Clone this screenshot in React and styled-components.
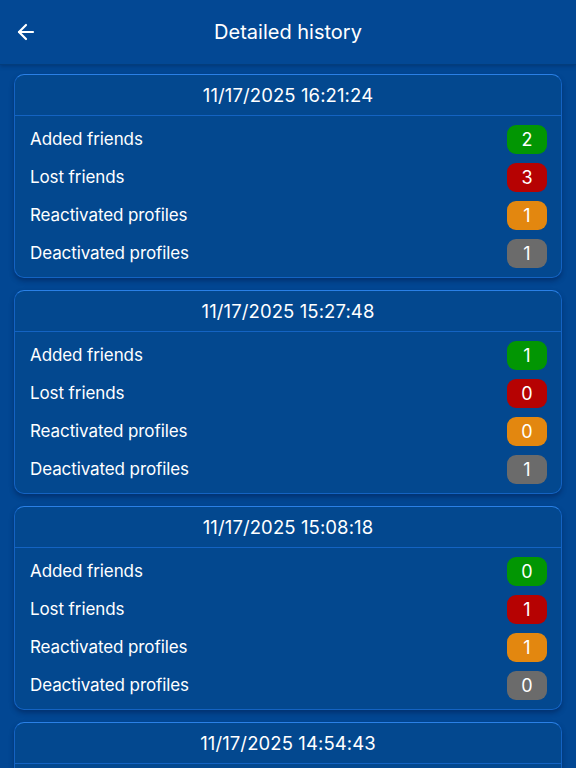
import React from 'react'
import styled, { createGlobalStyle } from 'styled-components'
import { ArrowLeft } from 'lucide-react'

const history = [
    { date: '11/17/2025 16:21:24', added: 2, lost: 3, reactivated: 1, deactivated: 1 },
    { date: '11/17/2025 15:27:48', added: 1, lost: 0, reactivated: 0, deactivated: 1 },
    { date: '11/17/2025 15:08:18', added: 0, lost: 1, reactivated: 1, deactivated: 0 },
    { date: '11/17/2025 14:54:43', added: 0, lost: 0, reactivated: 0, deactivated: 0 },
];

const badgeColors = {
    added: '#029603',
    lost: '#b60202',
    reactivated: '#e3870f',
    deactivated: '#6b6b6b',
};

const rows = [
    { key: 'added', label: 'Added friends' },
    { key: 'lost', label: 'Lost friends' },
    { key: 'reactivated', label: 'Reactivated profiles' },
    { key: 'deactivated', label: 'Deactivated profiles' },
];

function App() {
    return (
        <>
            <GlobalStyle />
            <Page>
                <Header>
                    <BackButton aria-label="Back">
                        <ArrowLeft size={24} strokeWidth={2.2} />
                    </BackButton>
                    <Title>Detailed history</Title>
                </Header>
                <List>
                    {history.map((entry) => (
                        <Card key={entry.date}>
                            <CardHead>{entry.date}</CardHead>
                            <CardBody>
                                {rows.map((row) => (
                                    <Row key={row.key}>
                                        <Label>{row.label}</Label>
                                        <Badge color={badgeColors[row.key]}>{entry[row.key]}</Badge>
                                    </Row>
                                ))}
                            </CardBody>
                        </Card>
                    ))}
                </List>
            </Page>
        </>
    );
}

const GlobalStyle = createGlobalStyle`
    html, body {
        margin: 0;
        padding: 0;
        background: #024793;
        overflow: hidden;
    }
    * {
        box-sizing: border-box;
    }
`;

const Page = styled.div`
    width: 576px;
    height: 768px;
    overflow: hidden;
    background: #024793;
    font-family: Inter, "Noto Sans", sans-serif;
    color: #fff;
`;

const Header = styled.div`
    position: relative;
    height: 64px;
    display: flex;
    align-items: center;
    justify-content: center;
    background: #034894;
    box-shadow: 0 1px 0 #033d7c, 0 2px 4px rgba(0, 20, 60, 0.35);
`;

const BackButton = styled.button`
    position: absolute;
    left: 14px;
    top: 20px;
    padding: 0;
    border: none;
    background: none;
    color: #fff;
    display: flex;
`;

const Title = styled.h1`
    margin: 0;
    font-size: 20px;
    font-weight: 400;
    letter-spacing: 0;
`;

const List = styled.div`
    display: flex;
    flex-direction: column;
    gap: 12px;
    padding: 10px 14px;
`;

const Card = styled.div`
    border: 1px solid #1463c2;
    border-top-color: #2a80e6;
    border-radius: 10px;
    background: #03488f;
    box-shadow: 0 3px 5px rgba(0, 25, 70, 0.45);
    flex-shrink: 0;
`;

const CardHead = styled.div`
    height: 41px;
    display: flex;
    align-items: center;
    justify-content: center;
    font-size: 18.5px;
    letter-spacing: 0.1px;
    border-bottom: 1px solid #1463c2;
`;

const CardBody = styled.div`
    padding: 4px 14px 5px 15px;
`;

const Row = styled.div`
    height: 38px;
    display: flex;
    align-items: center;
    justify-content: space-between;
`;

const Label = styled.span`
    font-size: 17px;
    letter-spacing: -0.1px;
`;

const Badge = styled.span`
    width: 40px;
    height: 29px;
    border-radius: 9px;
    display: flex;
    align-items: center;
    justify-content: center;
    font-size: 18px;
    background: ${(p) => p.color};
`;

export default App;
